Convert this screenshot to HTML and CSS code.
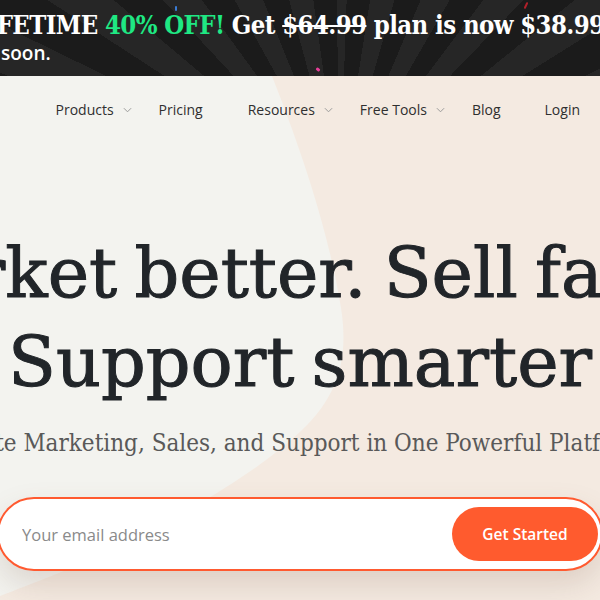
FILE: index.html
```html
<!DOCTYPE html>
<html lang="en">
<head>
<meta charset="utf-8">
<title>Market better. Sell faster. Support smarter</title>
<link rel="stylesheet" href="styles.css">
</head>
<body>
<header class="promo">
  <i class="confetti c1"></i><i class="confetti c2"></i><i class="confetti c3"></i>
  <p class="promo-main">LIFETIME <span class="green">40% OFF!</span> Get <s>$64.99</s> plan is now $38.99</p>
  <p class="promo-sub">soon.</p>
</header>
<section class="hero">
  <svg class="blob" width="600" height="524" viewBox="0 0 600 524" aria-hidden="true">
    <path d="M-10 -10 L268 -10 C296 60 328 150 341 232 C349 282 338 320 302 354 C262 392 200 430 120 470 C70 494 20 512 -10 524 Z" fill="#f3f3ef"/>
  </svg>
  <nav class="nav">
    <a class="nav-item">Products<svg class="caret" viewBox="0 0 10 6"><path d="M1 1 L5 5 L9 1" fill="none" stroke="#9a9a9a" stroke-width="1.1"/></svg></a>
    <a class="nav-item">Pricing<span class="caret-space"></span></a>
    <a class="nav-item">Resources<svg class="caret" viewBox="0 0 10 6"><path d="M1 1 L5 5 L9 1" fill="none" stroke="#9a9a9a" stroke-width="1.1"/></svg></a>
    <a class="nav-item">Free Tools<svg class="caret" viewBox="0 0 10 6"><path d="M1 1 L5 5 L9 1" fill="none" stroke="#9a9a9a" stroke-width="1.1"/></svg></a>
    <a class="nav-item">Blog<span class="caret-space"></span></a>
    <a class="nav-item login">Login</a>
  </nav>
  <div class="hero-body">
    <h1 class="title"><span>Market better. Sell faster</span><span>Support smarter</span></h1>
    <p class="subtitle"><span>Unite Marketing, Sales, and Support in One Powerful Platform</span></p>
    <form class="signup">
      <input class="email" type="email" placeholder="Your email address">
      <button class="cta" type="button">Get Started</button>
    </form>
  </div>
</section>
</body>
</html>
```
FILE: styles.css
```css
html, body {
  margin: 0;
  padding: 0;
}
body {
  width: 600px;
  height: 600px;
  overflow: hidden;
  background: #f4eae1;
}

/* promo banner */
.promo {
  position: relative;
  height: 76px;
  overflow: hidden;
  color: #fff;
  background: #1c1c1c repeating-conic-gradient(from 2deg at 340px 190px, #1b1b1b 0deg 7deg, #262626 7deg 14deg);
}
.promo-main {
  margin: 0;
  padding-top: 10px;
  font: 700 25.5px/30px "DejaVu Serif Condensed", "DejaVu Serif", serif;
  font-stretch: condensed;
  letter-spacing: -0.6px;
  white-space: nowrap;
  text-indent: -29px;
}
.promo-main .green { color: #1fe883; }
.promo-main s { text-decoration-thickness: 2px; }
.promo-sub {
  margin: 2px 0 0;
  padding-left: 1px;
  font: 600 19px/22px "Open Sans", sans-serif;
}
.confetti {
  position: absolute;
  display: block;
  width: 2px;
  height: 5px;
  border-radius: 1px;
}
.c1 { left: 175px; top: 6px; background: #3a7bd5; }
.c2 { left: 316px; top: 68px; width: 4px; height: 3px; background: #e83f9a; transform: rotate(40deg); }
.c3 { left: 525px; top: 2px; height: 7px; background: #b0202a; transform: rotate(25deg); }

/* hero */
.hero {
  position: relative;
  height: 524px;
  overflow: hidden;
  background: #f4eae1;
}
.blob {
  position: absolute;
  left: 0;
  top: 0;
}
.nav {
  position: relative;
  display: flex;
  justify-content: flex-end;
  align-items: center;
  height: 67px;
  padding-right: 20px;
  font: 400 14px/1 "Open Sans", sans-serif;
  color: #2f2f2f;
}
.nav-item {
  display: flex;
  align-items: center;
  margin-left: 27px;
}
.caret {
  width: 9px;
  height: 6px;
  margin-left: 9px;
}
.caret-space {
  display: inline-block;
  width: 18px;
}
.login { margin-left: 26px; }

.hero-body {
  position: relative;
  display: flex;
  flex-direction: column;
  align-items: center;
}
.title {
  display: flex;
  flex-direction: column;
  align-items: center;
  margin: 86px 0 0;
  font: 400 70px/89px "DejaVu Serif", serif;
  word-spacing: -5px;
  color: #212529;
  -webkit-text-stroke: 1px #212529;
  white-space: nowrap;
}
.subtitle {
  margin: 20px 0 0;
  font: 300 24px/32px "DejaVu Serif Condensed", "DejaVu Serif", serif;
  font-stretch: condensed;
  color: #595959;
  white-space: nowrap;
  display: flex;
  justify-content: center;
  width: 600px;
}
.signup {
  display: flex;
  align-items: center;
  box-sizing: border-box;
  flex: none;
  width: 606px;
  height: 74px;
  margin-top: 38px;
  padding: 0 3px 0 23px;
  background: #fff;
  border: 2px solid #ff5a30;
  border-radius: 37px;
  box-shadow: 0 14px 30px rgba(120, 90, 70, 0.18);
}
.email {
  flex: 1;
  min-width: 0;
  border: 0;
  outline: 0;
  background: transparent;
  font: 400 16.5px "Open Sans", sans-serif;
  color: #333;
  padding: 0;
}
.email::placeholder { color: #8a8a8a; }
.cta {
  flex: none;
  width: 146px;
  height: 54px;
  border: 0;
  border-radius: 27px;
  background: #ff5b2e;
  color: #fff;
  font: 600 15.5px "Open Sans", sans-serif;
  padding: 0;
}
```
